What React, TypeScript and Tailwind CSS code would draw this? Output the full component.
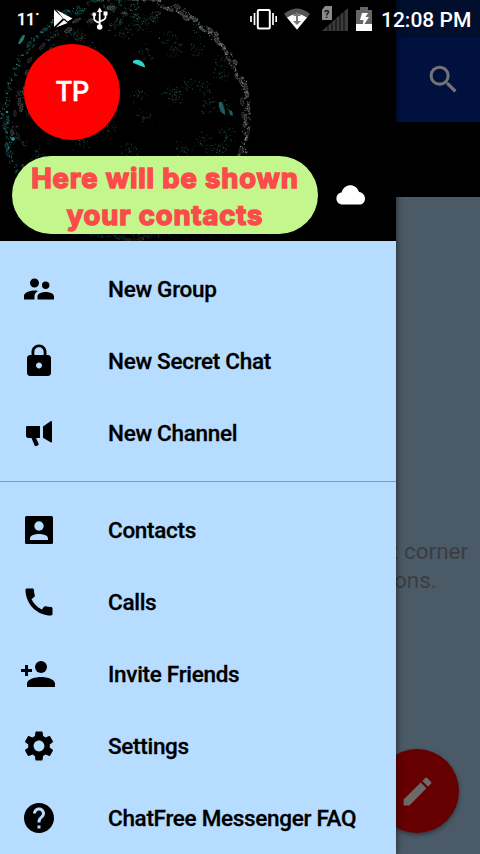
import {JSX, ReactNode} from "react";
import {MdCall, MdEdit, MdHelp, MdLock, MdSearch, MdSettings, MdSupervisorAccount} from "react-icons/md";

type Speck = { x: number; y: number; r: number; color: string; opacity: number };
type Cell = { x: number; y: number; rx: number; ry: number; angle: number; color: string; opacity: number };

// small seeded generator, so the header looks the same on every render
function createRandom(seed: number): () => number {
    let s = seed;
    return () => {
        s = (s * 16807) % 2147483647;
        return s / 2147483647;
    };
}

const rand = createRandom(4211);

function buildSpecks(): Speck[] {
    const specks: Speck[] = [];

    const cluster = (cx: number, cy: number, w: number, h: number, count: number, color: string, strength: number) => {
        for (let i = 0; i < count; i++) {
            specks.push({
                x: cx + (rand() + rand() - 1) * w,
                y: cy + (rand() + rand() - 1) * h,
                r: 0.35 + rand() * 0.35,
                color,
                opacity: (0.3 + rand() * 0.7) * strength,
            });
        }
    };

    // outer rim
    for (let i = 0; i < 150; i++) {
        const a = (i / 150) * Math.PI * 2;
        const rx = 124 - rand() * 5;
        const right = Math.cos(a) > 0.1;
        cluster(126 + Math.cos(a) * rx, 118 + Math.sin(a) * (rx - 2), 3, 3, 8, right ? "#a9b0af" : "#3a9c92", 0.85);
    }
    // band behind the rim
    for (let i = 0; i < 60; i++) {
        const a = Math.PI * (0.65 + rand() * 0.95);
        const rx = 92 + rand() * 22;
        cluster(126 + Math.cos(a) * rx, 118 + Math.sin(a) * rx, 5, 5, 16, rand() > 0.5 ? "#777b7b" : "#2b8579", 0.6);
    }
    // inside
    const spots = [[172, 93], [176, 98], [190, 85], [203, 88], [138, 96], [145, 117], [82, 142], [130, 151], [107, 127],
        [148, 52], [197, 50], [175, 50], [168, 38], [140, 22], [135, 10], [123, 32], [143, 24], [202, 140], [183, 149],
        [222, 108], [209, 105], [222, 75], [222, 62], [200, 30], [228, 132], [225, 145], [90, 50], [75, 34], [215, 150]];
    spots.forEach(([x, y]) => cluster(x, y, 11, 9, 34, "#4f9088", 0.6));
    return specks;
}

function buildCells(): Cell[] {
    const cells: Cell[] = [];
    for (let deg = 0; deg < 360; deg += 3.2) {
        if (rand() < 0.22) continue;
        const a = (deg / 180) * Math.PI;
        const left = Math.cos(a) < 0;
        const radius = left ? 104 + rand() * 20 : 117 + rand() * 7;
        // the bottom of the ring fades into the black
        const fade = deg > 60 && deg < 130 ? 0.4 : 1;
        cells.push({
            x: 126 + Math.cos(a) * radius,
            y: 118 + Math.sin(a) * (radius - 1),
            rx: 2.5 + rand() * 2,
            ry: 1 + rand() * 0.9,
            angle: deg + 90,
            color: left && radius > 115 ? "#2b9c90" : "#8f9493",
            opacity: fade * (left ? 0.4 + rand() * 0.35 : 0.4 + rand() * 0.5),
        });
    }
    return cells;
}

const specks = buildSpecks();
const cells = buildCells();

function HeaderArt(): JSX.Element {
    return (
        <svg className="absolute left-0 top-0" width="396" height="241" viewBox="0 0 396 241">
            {specks.map((s, i) => <circle key={i} cx={s.x} cy={s.y} r={s.r} fill={s.color} opacity={s.y > 225 ? s.opacity * 0.4 : s.opacity}/>)}
            {cells.map((c, i) => (
                <ellipse key={i} cx={c.x} cy={c.y} rx={c.rx} ry={c.ry} transform={`rotate(${c.angle} ${c.x} ${c.y})`}
                         fill={c.color} fillOpacity="0.35" stroke={c.color} strokeWidth="0.8" strokeDasharray="1.5 1"
                         opacity={c.opacity}/>
            ))}
            <path d="M133 61q4-2.500 8 0 4 2.500 4 6.500l-4-1.500-3-1-2-1-3-1z" fill="#2fd5cc"/>
            <path d="M219 102l3 0 3 9 0 4-3-2-3-6zM229 110l3 1 1 5-3-1z" fill="#1d5e64"/>
            <path d="M18 44q1-5 5-9l2 0q-1 6-5 9z" fill="#207b74"/>
            <circle cx="13" cy="139" r="2" fill="#28878a"/>
            <circle cx="7" cy="112" r="1.300" fill="#28878a"/>
        </svg>
    );
}

function StatusBar(): JSX.Element {
    return (
        <div className="absolute left-0 top-0 z-20 flex h-[38px] w-full items-center text-white">
            <span className="mt-px ml-[17px] w-[37px] font-['Roboto'] text-[16px] font-medium leading-none [-webkit-text-stroke:0.300px_#fff]">11<span>˙</span></span>
            <svg width="19" height="20" viewBox="0 0 19 20" fill="currentColor">
                <path d="M0 0.500l9 8.700L0 18z"/>
                <path d="M2 0.500l11.500 6.500-3.500 3.200zM2 18.500l8-7.500 3.500 3zM10.500 9.500l3-2.800 5 2.800-5 3z"/>
            </svg>
            <svg className="ml-[19px]" width="16" height="24" viewBox="0 0 16 24" fill="none" stroke="currentColor" strokeWidth="1.800">
                <path d="M7.700 3v17M2.200 8v4q0 2 5.500 4M13.500 7v3.500q0 2-5.800 4"/>
                <path d="M7.700 0.500l2.700 4.500h-5.400z" fill="currentColor" stroke="none"/>
                <circle cx="7.700" cy="20" r="2.800" fill="currentColor" stroke="none"/>
                <circle cx="2.200" cy="7.500" r="1.900" fill="currentColor" stroke="none"/>
                <path d="M11.500 4.500h4v4h-4z" fill="currentColor" stroke="none"/>
            </svg>
            <svg className="ml-[142px]" width="27" height="22" viewBox="0 0 27 22" fill="none" stroke="currentColor">
                <rect x="7.800" y="2" width="12" height="18.500" rx="1" strokeWidth="2"/>
                <path d="M4.500 5v12M23 5v12M1 8v6M26.200 8v6" strokeWidth="1.700"/>
            </svg>
            <svg className="ml-[7px]" width="26" height="22" viewBox="0 0 26 22">
                <path d="M0 6Q13-5 26 6L13 22z" fill="#555"/>
                <path d="M3 9.500Q8 6 13 6T23 9.500L13 21.500z" fill="#fff"/>
                <path d="M13 4l4 4h-3v5h3l-4 4-4-4h3V8H9z" fill="#777"/>
            </svg>
            <svg className="ml-3" width="27" height="26" viewBox="0 0 27 26">
                <path d="M3 0h7v14H0V4z" fill="#8a8a8a"/>
                <text x="2" y="12" fontSize="11" fontWeight="700" fontFamily="Roboto, sans-serif" fill="#111">?</text>
                <path d="M0 25L26 2v23z" fill="#3c3c3c"/>
                <path d="M6 20v5M10 17v8M14 13v12M18 9v16M22 6v19" stroke="#141414" strokeWidth="1.300"/>
            </svg>
            <svg className="ml-[7px]" width="16" height="24" viewBox="0 0 16 24">
                <path d="M4 0h8v3h4v15H0V3h4z" fill="#666"/>
                <path d="M0 17h16v7H0zM6 6h6l-2.500 4H13L6.500 20 7.500 13H4z" fill="#fff"/>
            </svg>
            <span className="ml-[9px] mt-[2px] whitespace-nowrap font-['Roboto'] text-[21px] font-medium leading-none">12:08 PM</span>
        </div>
    );
}

function MenuItem({icon, label}: { icon: ReactNode; label: string }): JSX.Element {
    return (
        <div className="flex h-[72px] items-center">
            <div className="ml-[21px] flex w-9 shrink-0 justify-center">{icon}</div>
            <span className="ml-[51px] mt-0.5 whitespace-nowrap text-[22.500px] font-medium tracking-[-0.3px] [-webkit-text-stroke:0.300px_#000]">{label}</span>
        </div>
    );
}

function ChannelIcon(): JSX.Element {
    return (
        <svg width="36" height="36" viewBox="0 0 36 36" fill="currentColor">
            <path d="M5 12.200q0-1.200 1.200-1.200H19v12h-4l2.500 5.500q.6 1.500-.8 2l-1.700.6q-1 .3-1.500-.8L10.500 23H7q-2-.3-2-2zM22 11.500l7.500-5.300Q31 5.500 31 7v19.500q0 1.500-1.500.8L22 22.800z"/>
        </svg>
    );
}

function ContactsIcon(): JSX.Element {
    return (
        <svg width="36" height="36" viewBox="0 0 36 36">
            <rect x="4" y="4" width="28" height="28" rx="1.500" fill="currentColor"/>
            <circle cx="18" cy="14" r="4.700" fill="#b6ddff"/>
            <path d="M9 28v-1.500c0-3.400 5.500-4.500 9-4.500s9 1.100 9 4.500V28z" fill="#b6ddff"/>
        </svg>
    );
}

function InviteIcon(): JSX.Element {
    return (
        <svg width="36" height="36" viewBox="0 0 36 36" fill="currentColor">
            <circle cx="20" cy="11" r="6"/>
            <path d="M6 31v-3.500C6 23 15 21 20 21s14 2 14 6.500V31zM4 9h3v4h4v3H7v4H4v-4H0v-3h4z"/>
        </svg>
    );
}

export default function App(): JSX.Element {
    return (
        <div className="relative h-[854px] w-[480px] overflow-hidden bg-[#4a5a66] font-['Roboto',sans-serif]">
            <div className="flex h-full flex-col">
                <div className="h-[38px] shrink-0 bg-[#010e2d]"/>
                <div className="flex h-[84px] shrink-0 items-center justify-end bg-[#001140] pb-px pr-[18px] text-[#737373]">
                    <MdSearch size={37}/>
                </div>
                <div className="h-[75px] shrink-0 bg-black"/>
                <div className="flex flex-1 flex-col">
                    <div className="ml-[391px] mt-[340px] whitespace-nowrap text-[22.500px] leading-[29px] text-[#3b3d40]">
                        <p>t corner</p>
                        <p className="ml-[3px]">ons.</p>
                    </div>
                    <div className="mb-[21px] ml-[375px] mt-auto flex size-[84px] items-center justify-center rounded-full bg-[#660000] text-[#6a6a6a] shadow-[0_2px_4px_rgba(0,0,0,0.4)]">
                        <MdEdit size={37}/>
                    </div>
                </div>
            </div>

            <div className="absolute left-0 top-0 z-10 flex h-full w-[396px] flex-col bg-[#b6ddff] text-black shadow-[0_0_7px_rgba(0,0,0,0.6)]">
                <div className="relative h-[241px] shrink-0 bg-black">
                    <HeaderArt/>
                    <div className="relative flex h-full flex-col pl-3 pt-11">
                        <div className="ml-3 flex size-24 items-center justify-center rounded-full bg-[#ff0000] pl-px pt-px text-[27px] font-medium text-white [-webkit-text-stroke:0.300px_#fff]">TP</div>
                        <div className="mt-4 flex items-center">
                            <div className="flex h-[78px] w-[306px] flex-col items-center justify-center whitespace-nowrap rounded-[39px] bg-[#c3f78d] pt-[3px] font-['Inter'] text-[27.500px] font-bold leading-[37px] tracking-[0.850px] text-[#fd4a4b] [-webkit-text-stroke:1.500px_#fd4a4b]">
                                <span>Here will be shown</span>
                                <span>your contacts</span>
                            </div>
                            <svg className="ml-[18px]" width="30" height="20" viewBox="0 0 30 20">
                                <path d="M7 19.500C-1.500 19.500-1.500 8.500 5.500 7.500C8.500-2 20-2 23 7C31 8 31 19.500 23 19.500z" fill="#fff"/>
                            </svg>
                        </div>
                    </div>
                </div>
                <div className="border-b border-[#7f9bb2] py-3">
                    <MenuItem icon={<MdSupervisorAccount size={36}/>} label="New Group"/>
                    <MenuItem icon={<MdLock size={36}/>} label="New Secret Chat"/>
                    <MenuItem icon={<ChannelIcon/>} label="New Channel"/>
                </div>
                <div className="pt-3">
                    <MenuItem icon={<ContactsIcon/>} label="Contacts"/>
                    <MenuItem icon={<MdCall size={36}/>} label="Calls"/>
                    <MenuItem icon={<InviteIcon/>} label="Invite Friends"/>
                    <MenuItem icon={<MdSettings size={36}/>} label="Settings"/>
                    <MenuItem icon={<MdHelp size={36}/>} label="ChatFree Messenger FAQ"/>
                </div>
            </div>

            <StatusBar/>
        </div>
    );
}
